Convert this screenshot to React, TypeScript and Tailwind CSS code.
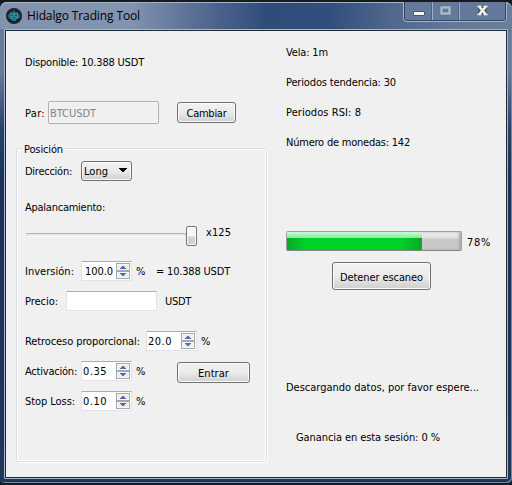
import { useLayoutEffect, useRef, useState, type ReactNode } from "react";

/** A caption whose tracking is adjusted so that it spans `width` pixels. */
function Text({ children, width, className = "" }: { children: string; width: number; className?: string }) {
  const ref = useRef<HTMLSpanElement>(null);
  const [tracking, setTracking] = useState(0);
  useLayoutEffect(() => {
    const node = ref.current;
    if (!node) return;
    node.style.letterSpacing = "0px";
    const style = getComputedStyle(node);
    const natural = node.getBoundingClientRect().width - parseFloat(style.paddingLeft);
    setTracking((width - natural) / children.length);
    node.style.letterSpacing = `${(width - natural) / children.length}px`;
  }, [children, width]);
  return (
    <span ref={ref} style={{ letterSpacing: tracking }} className={`block shrink-0 whitespace-pre ${className}`}>
      {children}
    </span>
  );
}

function Row({ children, className }: { children: ReactNode; className: string }) {
  return <div className={`flex shrink-0 items-center ${className}`}>{children}</div>;
}

function Button({ children, className }: { children: ReactNode; className: string }) {
  return (
    <button
      className={`flex shrink-0 items-center justify-center rounded-[3px] border border-[#707070] bg-linear-to-b from-[#f2f2f2] from-0% via-[#ebebeb] via-50% to-[#cfcfcf] shadow-[inset_0_0_0_1px_#fafafa] ${className}`}
    >
      {children}
    </button>
  );
}

function SpinBox({ value, width, className, pad = "pl-px" }: { value: string; width: number; className: string; pad?: string }) {
  return (
    <div
      className={`flex h-5 w-[51px] shrink-0 items-center justify-between border border-[#e2e3ea] border-t-[#abadb3] bg-white pr-px ${className}`}
    >
      <Text width={width} className={pad}>{value}</Text>
      <svg width="14" height="17" viewBox="0 0 14 17" className="shrink-0" shapeRendering="crispEdges">
        <path d="M.5 .5h13v7h-13zM.5 8.5h13v7h-13z" fill="#ececec" stroke="#a7a7a7" />
        <path d="M1.5 1.5h11v5h-11zM1.5 9.5h11v5h-11z" fill="none" stroke="#f8f8f8" />
        <path d="M6 3h2v1h1v1h1v1H4V5h1V4h1zM4 10h6v1H9v1H8v1H6v-1H5v-1H4z" fill="#5468b4" />
      </svg>
    </div>
  );
}

function RobotIcon() {
  return (
    <svg width="16" height="16" viewBox="0 0 16 16" className="ml-1.5 shrink-0">
      <circle cx="8" cy="8" r="8" fill="#1d2326" />
      <path d="M7.5 2.200h1v2.500h-1z" fill="#2b8ba0" />
      <rect x="3.6" y="4.4" width="8.8" height="6.800" rx="1.4" fill="#2a8ca1" />
      <path d="M2.3 6.7h1v3h-1zM12.7 6.7h1v3h-1zM6 11.200h4v1.600H6z" fill="#2a8ca1" />
      <path d="M5.4 6.8h1.3v1.200H5.4zM9.3 6.8h1.3v1.200H9.3zM6.200 9.4h3.600v.6H6.200z" fill="#102c3a" />
    </svg>
  );
}

function CaptionButtons() {
  return (
    <svg width="104" height="20" viewBox="0 0 104 20" className="-mt-px mr-[5px] ml-auto shrink-0">
      <path d="M.5 0v16.5q0 3 3 3h97q3 0 3-3V0" fill="#647a9c" stroke="#a3b4c8" />
      <path d="M1.5 0v16q0 2.500 2.500 2.500h96q2.500 0 2.500-2.500V0" fill="none" stroke="#34465f" />
      <path d="M29.500 0v18M56.500 0v18" stroke="#a0b1c7" />
      <path d="M28.500 0v18M55.500 0v18" stroke="#4c6280" />
      <rect x="10.500" y="9.500" width="11" height="4" rx=".5" fill="#f5f5f0" stroke="#4d5660" />
      <path d="M38.500 5.500h8v6h-8z" fill="none" stroke="#61758f" strokeWidth="4" />
      <path d="M38.500 5.500h8v6h-8z" fill="none" stroke="#abb9cb" strokeWidth="2.400" />
      <path d="m76.500 5 6 7m0-7-6 7" stroke="#434e5e" strokeWidth="5" />
      <path d="m76.500 5 6 7m0-7-6 7" stroke="#f5f5f0" strokeWidth="2.600" />
      <path d="M74.500 4.500h4M80.500 4.500h4M74.500 12.500h4M80.500 12.500h4" stroke="#f5f5f0" strokeWidth="1.400" />
    </svg>
  );
}

function ProgressBar() {
  return (
    <div className="flex h-5 w-[176px] shrink-0 rounded-[2px] border border-[#a0a0a0] border-b-[#868686] bg-linear-to-b from-[#f5f5f5] from-0% via-[#dddddd] via-35% to-[#c9c9c9] to-40% shadow-[inset_-2px_0_3px_#aaaaaa]">
      <div className="flex w-[135px] flex-col">
        <div className="h-[6px] bg-linear-to-b from-[#c8fbd0] to-[#8bea9c]" />
        <div className="grow bg-linear-to-r from-[#08a725] from-0% via-[#00d328] via-14% to-[#00d328]">
          <div className="ml-auto h-full w-[22px] bg-linear-to-r from-[#00d328] to-[#07a823]" />
        </div>
      </div>
    </div>
  );
}

function PositionGroup() {
  return (
    <div className="mt-[24px] ml-[10px] flex h-[314px] w-[251px] shrink-0 flex-col rounded-[3px] border border-[#d5dfe5] pl-[8px] shadow-[inset_1px_1px_0_#fff,inset_-1px_-1px_0_#fff,1px_1px_0_#fff]">
      <div className="-mt-2 ml-[-2px] flex h-[15px] w-[42px] shrink-0 items-center bg-[#f0f0f0] pl-px">
        <Text width={39}>Posición</Text>
      </div>
      <Row className="mt-[5px] h-5">
        <Text width={47}>Dirección:</Text>
        <Button className="ml-[9px] h-5 w-[51px] gap-[11px] pr-[2px]">
          <Text width={24}>Long</Text>
          <svg width="8" height="5" viewBox="0 0 8 5" className="-mt-0.5" shapeRendering="crispEdges">
            <path d="M0 0h8v1H7v1H6v1H5v1H3V3H2V2H1V1H0z" fill="#000" />
          </svg>
        </Button>
      </Row>
      <Row className="mt-[19px] h-[14px]">
        <Text width={80}>Apalancamiento:</Text>
      </Row>
      <Row className="mt-[12px] h-5">
        <div className="mt-[-3px] ml-px h-[4px] w-[160px] border border-[#d6d6d6] border-t-[#b0b0b0] border-b-white bg-[#e7eaea]" />
        <div className="h-5 w-[11px] rounded-[2px] border border-[#777777] bg-linear-to-b from-[#f6f6f6] from-50% to-[#d2d2d2] to-55% shadow-[inset_0_0_0_1px_#fafafa]" />
        <Text width={25} className="mt-[-8px] ml-[9px]">x125</Text>
      </Row>
      <Row className="mt-[15px] h-5">
        <Text width={49}>Inversión:</Text>
        <SpinBox value="100.0" width={28} pad="pl-[3px]" className="ml-[7px]" />
        <Text width={11} className="ml-[4px]">%</Text>
        <Text width={74} className="ml-[9px]">= 10.388 USDT</Text>
      </Row>
      <Row className="mt-[10px] h-5">
        <Text width={33}>Precio:</Text>
        <div className="ml-[8px] h-5 w-[91px] rounded-[1px] border border-[#e2e3ea] border-t-[#abadb3] bg-white" />
        <Text width={26} className="ml-[8px]">USDT</Text>
      </Row>
      <Row className="mt-[20px] h-5">
        <Text width={115}>Retroceso proporcional:</Text>
        <SpinBox value="20.0" width={24} className="ml-[6px]" />
        <Text width={11} className="ml-[4px]">%</Text>
      </Row>
      <Row className="mt-[10px] h-5">
        <Text width={52}>Activación:</Text>
        <SpinBox value="0.35" width={24} className="ml-[4px]" />
        <Text width={11} className="ml-[4px]">%</Text>
        <Button className="mt-[3px] ml-[30px] h-[21px] w-[73px]">
          <Text width={31}>Entrar</Text>
        </Button>
      </Row>
      <Row className="mt-[10px] h-5">
        <Text width={50}>Stop Loss:</Text>
        <SpinBox value="0.10" width={24} className="ml-[6px]" />
        <Text width={11} className="ml-[4px]">%</Text>
      </Row>
    </div>
  );
}

export default function App() {
  return (
    <div className="flex h-[485px] w-[512px] flex-col overflow-hidden bg-[#141c22] pt-[2px] font-['DejaVu_Sans_Condensed','DejaVu_Sans',sans-serif] text-[11px] leading-[14px] text-black [font-stretch:condensed]">
      <div className="flex h-[481px] w-[512px] shrink-0 flex-col rounded-t-[7px] rounded-b-[5px] bg-[linear-gradient(180deg,#66799a_0px,#687b9b_70px,#2b426a_125px,#1b3256_180px,#20365b_100%)] shadow-[inset_0_1px_0_#a6b3c3,inset_-1px_-1px_0_#75889f]">
        <header className="flex h-[27px] shrink-0 rounded-t-[7px] border-t border-[#a6b3c3] bg-[linear-gradient(90deg,#8293ae_0px,#8394b0_130px,#5b7096_190px,#304d7a_265px,#314f7c_330px,#4f678d_390px,#627899_450px,#6a7e9c_512px)]">
          <div className="flex h-[26px] items-center">
            <RobotIcon />
            <Text width={113} className="ml-[5px] font-['Open_Sans',sans-serif] text-[12px] leading-[16px] text-black [font-stretch:normal]">
              Hidalgo Trading Tool
            </Text>
          </div>
          <CaptionButtons />
        </header>
        <main className="ml-[4px] flex h-[450px] w-[504px] shrink-0 rounded-[1px] border border-[#a9b8c8] bg-[#f0f0f0] shadow-[inset_0_0_0_1px_#1d2a3b]">
          <section className="flex w-[280px] shrink-0 flex-col pl-px [&_span]:pt-[2px]">
            <Row className="mt-[23px] h-[18px] pl-[19px]">
              <Text width={119}>Disponible: 10.388 USDT</Text>
            </Row>
            <Row className="mt-[30px] h-[23px] pl-[19px]">
              <Text width={20}>Par:</Text>
              <div className="ml-[3px] flex h-[23px] w-[111px] items-center rounded-[2px] border border-[#afafaf] pl-px text-[#838383] shadow-[inset_0_0_0_1px_#f7f7f7]">
                <Text width={46}>BTCUSDT</Text>
              </div>
              <Button className="ml-[18px] h-[21px] w-[59px]">
                <Text width={40}>Cambiar</Text>
              </Button>
            </Row>
            <PositionGroup />
          </section>
          <section className="flex flex-col items-start pt-[16px] pl-px">
            <Text width={42}>Vela: 1m</Text>
            <Text width={110} className="mt-4">Periodos tendencia: 30</Text>
            <Text width={75} className="mt-4">Periodos RSI: 8</Text>
            <Text width={124} className="mt-4">Número de monedas: 142</Text>
            <Row className="mt-[81px] h-5">
              <ProgressBar />
              <Text width={24} className="ml-[5px] pt-[3px]">78%</Text>
            </Row>
            <Button className="mt-[11px] ml-[46px] h-7 w-[99px]">
              <Text width={83} className="pt-[3px]">Detener escaneo</Text>
            </Button>
            <Text width={193} className="mt-[91px]">Descargando datos, por favor espere...</Text>
            <Text width={144} className="mt-[36px] ml-[10px]">Ganancia en esta sesión: 0 %</Text>
          </section>
        </main>
      </div>
    </div>
  );
}
